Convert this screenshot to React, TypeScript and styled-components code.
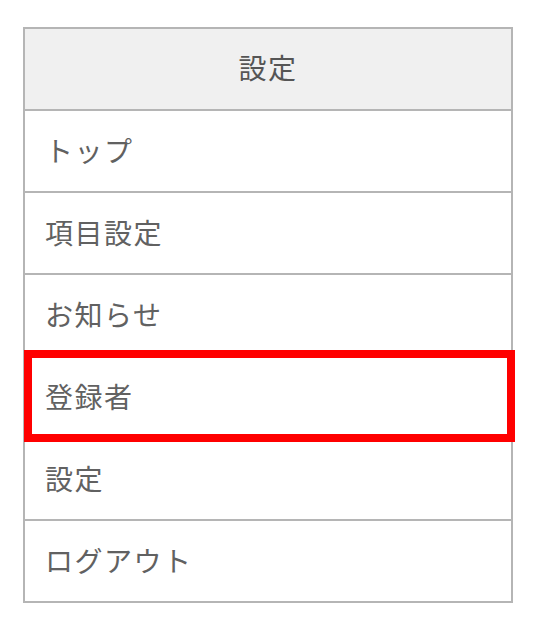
import React from "react";
import styled, { createGlobalStyle } from "styled-components";

const GlobalStyle = createGlobalStyle`
  html, body {
    margin: 0;
    padding: 0;
    background: #ffffff;
  }
  body {
    font-family: "Noto Sans CJK JP", "Noto Sans", sans-serif;
  }
`;

const Page = styled.div`
  padding: 27px 0 0 23px;
`;

const Menu = styled.nav`
  box-sizing: border-box;
  width: 490px;
  border: 2px solid #b5b5b5;
  display: flex;
  flex-direction: column;
`;

const Header = styled.div`
  box-sizing: border-box;
  height: 82px;
  padding-bottom: 4px;
  display: flex;
  align-items: center;
  justify-content: center;
  background: #f0f0f0;
  border-bottom: 2px solid #b5b5b5;
  color: #555555;
  font-size: 28px;
  letter-spacing: 1.5px;
`;

const Item = styled.a<{ $active?: boolean; $last?: boolean }>`
  box-sizing: border-box;
  position: relative;
  height: ${(p) => (p.$last ? "80px" : "82px")};
  display: flex;
  align-items: center;
  padding: 0 0 3px 20px;
  border-bottom: ${(p) => (p.$last ? "none" : "2px solid #b5b5b5")};
  color: #616161;
  font-size: 28px;
  letter-spacing: 1.5px;
  text-decoration: none;

  ${(p) =>
    p.$active
      ? `
    &::after {
      content: "";
      position: absolute;
      left: -1px;
      right: -4px;
      top: -7px;
      bottom: -5px;
      border: 8px solid #ff0000;
      pointer-events: none;
    }
  `
      : ""}
`;

const items = ["トップ", "項目設定", "お知らせ", "登録者", "設定", "ログアウト"];

export default function App() {
  return (
    <>
      <GlobalStyle />
      <Page>
        <Menu>
          <Header>設定</Header>
          {items.map((label, i) => (
            <Item
              key={label + i}
              $active={label === "登録者"}
              $last={i === items.length - 1}
            >
              {label}
            </Item>
          ))}
        </Menu>
      </Page>
    </>
  );
}
